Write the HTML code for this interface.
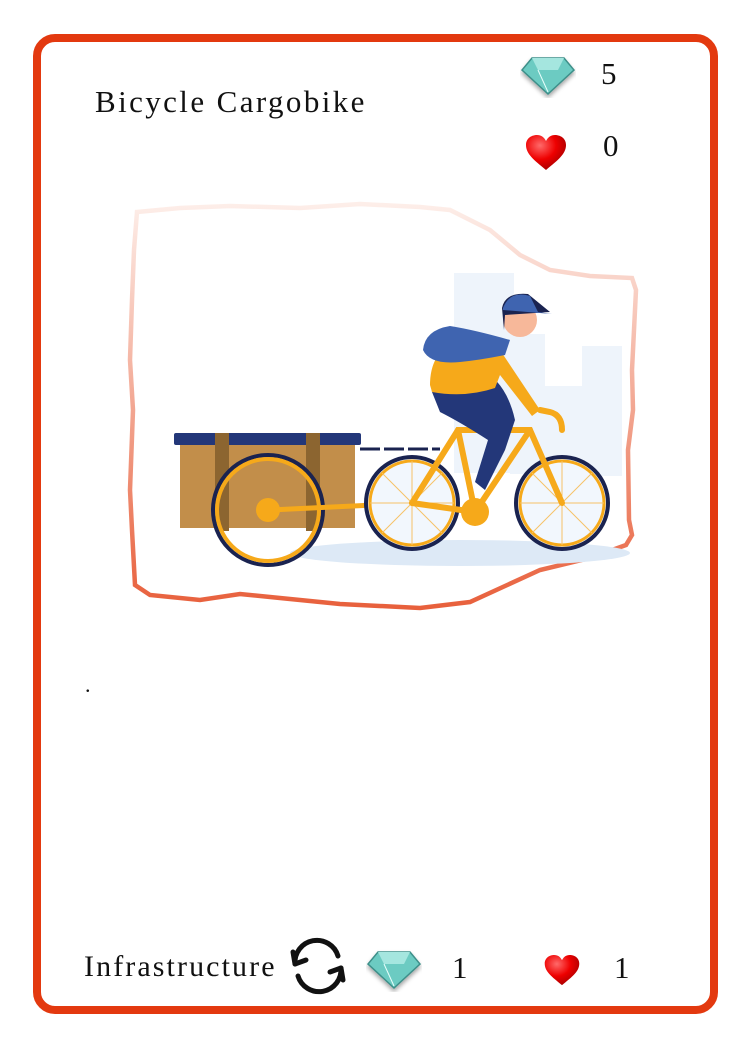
<!DOCTYPE html>
<html><head><style>
*{margin:0;padding:0}
body{width:750px;height:1050px;background:#fff;position:relative;overflow:hidden;font-family:"Liberation Serif",serif;color:#111}
.card{position:absolute;left:33px;top:34px;width:669px;height:964px;border:8px solid #e3390f;border-radius:22px}
.t{position:absolute;font-size:31px}
</style></head><body>
<div class="card"></div>
<div class="t" style="left:95px;top:84px;font-size:31px;letter-spacing:2.4px">Bicycle Cargobike</div>
<svg style="position:absolute;left:520px;top:54px" width="56" height="44" viewBox="0 0 56 44"><defs><filter id="s"><feDropShadow dx="0" dy="3" stdDeviation="2" flood-opacity=".35"/></filter></defs><g filter="url(#s)"><polygon points="12,4 44,4 54,16 28,40 2,16" fill="#6ccbc2" stroke="#3e8f89" stroke-width="1.5"/><polygon points="12,4 44,4 38,16 18,16" fill="#a5e6df"/><line x1="18" y1="16" x2="28" y2="38" stroke="#e8fffc" stroke-width="1"/></g></svg>
<div class="t" style="left:601px;top:56px">5</div>
<svg style="position:absolute;left:524px;top:134px" width="44" height="38" viewBox="0 0 44 38"><defs><radialGradient id="h" cx=".35" cy=".3" r=".8"><stop offset="0" stop-color="#ff6a6a"/><stop offset=".5" stop-color="#e00"/><stop offset="1" stop-color="#900"/></radialGradient></defs><path d="M22 36 C10 26 2 20 2 11 C2 4 8 1 13 1 C17 1 20 3 22 7 C24 3 27 1 31 1 C36 1 42 4 42 11 C42 20 34 26 22 36Z" fill="url(#h)"/></svg>
<div class="t" style="left:603px;top:128px">0</div>
<svg style="position:absolute;left:120px;top:190px" width="530" height="430" viewBox="0 0 530 430">
<defs><linearGradient id="bg" x1="0" y1="0" x2="0" y2="1"><stop offset="0" stop-color="#fdeee9"/><stop offset="1" stop-color="#e8603c"/></linearGradient></defs>
<path d="M17 22 L60 18 L110 16 L180 18 L240 14 L300 17 L330 20 L370 40 L400 65 L430 80 L470 86 L512 88 L516 100 L512 180 L513 220 L508 260 L509 330 L512 345 L506 355 L470 368 L420 380 L350 412 L300 418 L220 414 L160 408 L120 404 L80 410 L30 405 L15 395 L12 340 L10 300 L13 220 L10 170 L12 110 L14 60 Z" fill="#fff" stroke="url(#bg)" stroke-width="4.5"/>
<rect x="334" y="83" width="60" height="200" fill="#eef4fb"/><rect x="390" y="144" width="35" height="140" fill="#eef4fb"/><rect x="425" y="196" width="40" height="90" fill="#eef4fb"/><rect x="462" y="156" width="40" height="130" fill="#eef4fb"/>
<ellipse cx="340" cy="363" rx="170" ry="13" fill="#dde9f6"/>
<rect x="60" y="250" width="175" height="88" fill="#c28e4a"/>
<rect x="54" y="243" width="187" height="12" rx="2" fill="#233779"/>
<rect x="95" y="243" width="14" height="98" fill="#8c6530"/><rect x="186" y="243" width="14" height="98" fill="#8c6530"/>
<circle cx="148" cy="320" r="55" fill="none" stroke="#1a2350" stroke-width="4"/><circle cx="148" cy="320" r="51" fill="none" stroke="#f6a91a" stroke-width="4"/>
<circle cx="148" cy="320" r="12" fill="#f6a91a"/>
<line x1="150" y1="320" x2="295" y2="313" stroke="#f6a91a" stroke-width="5"/>
<line x1="240" y1="259" x2="320" y2="259" stroke="#1a2350" stroke-width="3" stroke-dasharray="20 4"/>
<circle cx="292" cy="313" r="46" fill="#f2f7fd" stroke="#1a2350" stroke-width="4"/><circle cx="292" cy="313" r="42" fill="none" stroke="#f6a91a" stroke-width="3"/>
<circle cx="442" cy="313" r="46" fill="#f2f7fd" stroke="#1a2350" stroke-width="4"/><circle cx="442" cy="313" r="42" fill="none" stroke="#f6a91a" stroke-width="3"/>
<g stroke="#f6c266" stroke-width="1"><line x1="292" y1="271" x2="292" y2="355"/><line x1="250" y1="313" x2="334" y2="313"/><line x1="262" y1="283" x2="322" y2="343"/><line x1="262" y1="343" x2="322" y2="283"/><line x1="442" y1="271" x2="442" y2="355"/><line x1="400" y1="313" x2="484" y2="313"/><line x1="412" y1="283" x2="472" y2="343"/><line x1="412" y1="343" x2="472" y2="283"/></g>
<g stroke="#f6a91a" stroke-width="6" fill="none" stroke-linecap="round"><path d="M292 313 L338 240 L410 240 L442 313"/><path d="M338 240 L355 322 L410 240"/><path d="M292 313 L355 322"/><path d="M420 220 L430 222 Q442 225 442 240"/></g>
<circle cx="355" cy="322" r="14" fill="#f6a91a"/>
<path d="M312 202 Q310 180 330 178 L350 175 Q385 185 395 230 L385 260 L365 300 L355 292 L368 250 Q340 232 320 222 Z" fill="#233779"/>
<path d="M310 195 Q310 160 340 150 Q365 145 380 160 L420 220 L412 226 L380 185 L375 198 Q345 208 312 202 Z" fill="#f6a91a"/>
<path d="M303 160 Q305 140 330 136 Q355 140 390 150 L385 165 Q360 170 340 172 Q310 175 303 160Z" fill="#3f64b0"/>
<circle cx="400" cy="130" r="17" fill="#f7b89a"/><path d="M382 118 Q385 102 408 104 L430 122 L385 125 L384 140 Z" fill="#1a2350"/><path d="M383 118 Q390 100 410 106 L418 122 L432 124 L383 120Z" fill="#3f64b0"/>
</svg>
<div class="t" style="left:85px;top:672px;font-size:22px">.</div>
<div class="t" style="left:84px;top:950px;font-size:30px;letter-spacing:2.1px">Infrastructure</div>
<svg style="position:absolute;left:288px;top:936px" width="60" height="60" viewBox="0 0 60 60" fill="none" stroke="#111" stroke-width="5" stroke-linecap="round" stroke-linejoin="round"><path d="M7 28 A22 22 0 0 1 50 20"/><path d="M53 32 A22 22 0 0 1 10 40"/><path d="M5 16 L7 28 L18 24"/><path d="M55 44 L53 32 L42 36"/></svg>
<svg style="position:absolute;left:366px;top:948px" width="56" height="44" viewBox="0 0 56 44"><g filter="url(#s)"><polygon points="12,4 44,4 54,16 28,40 2,16" fill="#6ccbc2" stroke="#3e8f89" stroke-width="1.5"/><polygon points="12,4 44,4 38,16 18,16" fill="#a5e6df"/><line x1="18" y1="16" x2="28" y2="38" stroke="#e8fffc" stroke-width="1"/></g></svg>
<div class="t" style="left:452px;top:950px">1</div>
<svg style="position:absolute;left:543px;top:954px" width="38" height="33" viewBox="0 0 44 38"><path d="M22 36 C10 26 2 20 2 11 C2 4 8 1 13 1 C17 1 20 3 22 7 C24 3 27 1 31 1 C36 1 42 4 42 11 C42 20 34 26 22 36Z" fill="url(#h)"/></svg>
<div class="t" style="left:614px;top:950px">1</div>
</body></html>
